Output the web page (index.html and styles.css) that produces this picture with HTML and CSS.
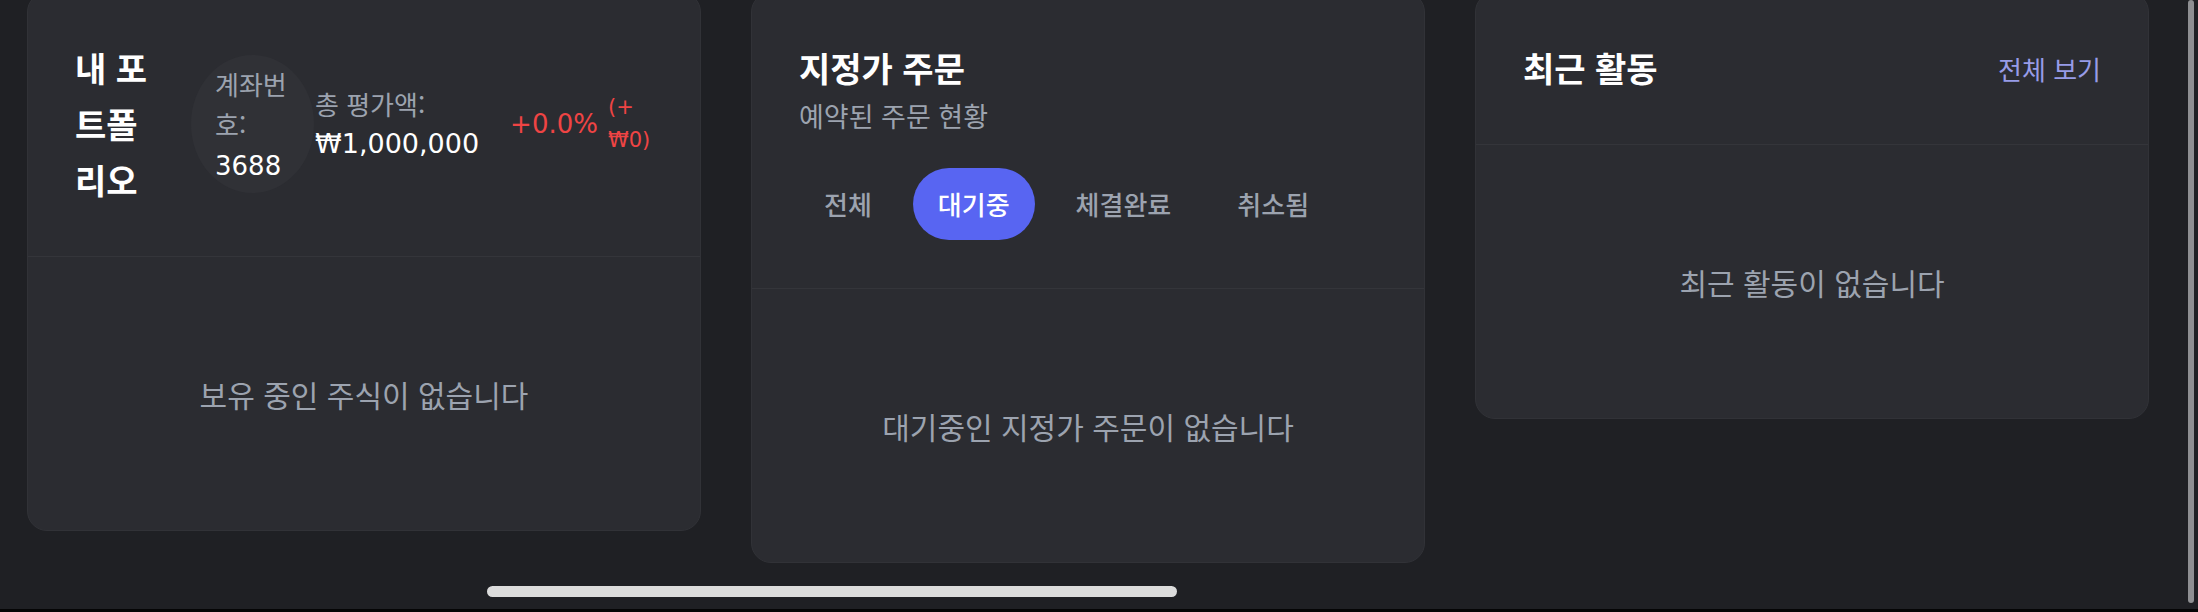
FILE: index.html
```html
<!DOCTYPE html>
<html lang="ko">
<head>
<meta charset="utf-8">
<title>Dashboard</title>
<link rel="stylesheet" href="styles.css">
</head>
<body>
<main class="dash">
  <section class="card">
    <header class="card-head pf-head">
      <h2 class="card-title pf-title">내 포트폴리오</h2>
      <div class="acct">계좌번호: <span class="num">3688</span></div>
      <div class="total">
        <div class="total-label">총 평가액:</div>
        <div class="total-value num">₩1,000,000</div>
      </div>
      <div class="change">
        <span class="change-pct num">+0.0%</span>
        <span class="change-amt num">(+<wbr>₩0)</span>
      </div>
    </header>
    <div class="card-body">보유 중인 주식이 없습니다</div>
  </section>

  <section class="card">
    <header class="card-head">
      <h2 class="card-title">지정가 주문</h2>
      <p class="card-sub">예약된 주문 현황</p>
      <nav class="tabs">
        <span class="tab">전체</span>
        <span class="tab tab-active">대기중</span>
        <span class="tab">체결완료</span>
        <span class="tab">취소됨</span>
      </nav>
    </header>
    <div class="card-body">대기중인 지정가 주문이 없습니다</div>
  </section>

  <section class="card">
    <header class="card-head act-head">
      <h2 class="card-title">최근 활동</h2>
      <a class="see-all">전체 보기</a>
    </header>
    <div class="card-body">최근 활동이 없습니다</div>
  </section>
</main>
<div class="vscroll"></div>
<div class="hscroll"></div>
<div class="frame-bottom"></div>
</body>
</html>
```

FILE: styles.css
```css
* { box-sizing: border-box; }

html, body {
  margin: 0;
  padding: 0;
  height: 100%;
  overflow: hidden;
  background: #1f2024;
  font-family: "Noto Sans CJK KR", "Noto Sans", sans-serif;
  color: #ffffff;
}

.num {
  font-family: "DejaVu Sans", "Noto Sans CJK KR", sans-serif;
}

.dash {
  display: grid;
  grid-template-columns: repeat(3, 1fr);
  gap: 50px;
  align-items: start;
  padding: 0 49px 0 27px;
  margin-top: -8px;
}

.card {
  background: #2b2c31;
  border: 1px solid #313237;
  border-radius: 20px;
  overflow: hidden;
}

.card-head {
  padding: 47px 47px 48px;
  border-bottom: 1px solid #34353a;
}

.card-title {
  margin: 0;
  font-size: 34px;
  line-height: 56px;
  font-weight: 700;
  color: #ffffff;
}

.card-body {
  height: 273px;
  display: flex;
  align-items: center;
  justify-content: center;
  font-size: 30px;
  color: #9ca3af;
}

/* portfolio header */
.pf-head {
  display: flex;
  align-items: center;
}

.pf-title {
  width: 90px;
  flex: none;
  margin-right: 26px;
}

.acct {
  flex: none;
  width: 123px;
  height: 138px;
  border-radius: 50%;
  padding: 9px 22px 9px 24px;
  background: #303136;
  color: #9ca3af;
  font-size: 26px;
  line-height: 40px;
  margin-right: 1px;
}

.acct .num { color: #ffffff; }

.total {
  flex: none;
  font-size: 26px;
  line-height: 40px;
  margin-right: 31px;
}

.total-label { color: #9ca3af; }

.total-value {
  color: #ffffff;
  font-size: 27px;
}

.change {
  display: flex;
  align-items: center;
  color: #ef4444;
}

.change-pct {
  font-size: 26px;
  line-height: 40px;
  margin-right: 10px;
}

.change-amt {
  width: 46px;
  font-size: 21px;
  line-height: 33px;
}

/* limit orders */
.card-sub {
  margin: 0;
  font-size: 27px;
  line-height: 40px;
  color: #9ca3af;
}

.tabs {
  display: flex;
  gap: 16px;
  margin-top: 32px;
}

.tab {
  padding: 16px 25px;
  font-size: 26px;
  line-height: 40px;
  font-weight: 500;
  color: #9ca3af;
  border-radius: 36px;
}

.tab-active {
  background: #5865f2;
  color: #ffffff;
}

/* activity */
.act-head {
  display: flex;
  align-items: center;
  justify-content: space-between;
}

.see-all {
  font-size: 26px;
  color: #979ce8;
  cursor: pointer;
}

/* overlay scrollbars / frame */
.vscroll {
  position: fixed;
  left: 2188px;
  top: 0;
  width: 6px;
  height: 603px;
  border-radius: 3px;
  background: #8e8f92;
}

.hscroll {
  position: fixed;
  left: 487px;
  top: 586px;
  width: 690px;
  height: 11px;
  border-radius: 6px;
  background: #dcdcdc;
}

.frame-bottom {
  position: fixed;
  left: 0;
  right: 0;
  bottom: 0;
  height: 3px;
  background: #050506;
}
```
